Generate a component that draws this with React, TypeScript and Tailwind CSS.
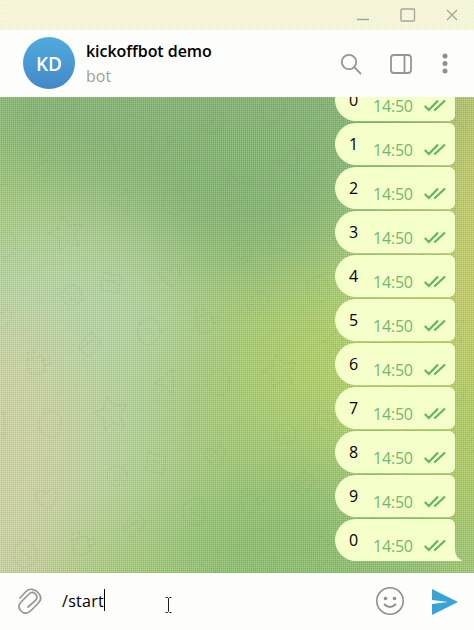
import React from "react";

const messages = ["0", "1", "2", "3", "4", "5", "6", "7", "8", "9", "0"];

function Checks() {
  return (
    <svg width="24" height="13" viewBox="0 0 24 13" fill="none" stroke="#5cb55c" strokeWidth="2">
      <path d="M.8 7 4.8 11 14 1.5M10 10.8h1.2L21 1.5" />
    </svg>
  );
}

function Bubble({ text, last }: { text: string; last: boolean }) {
  return (
    <div className="relative flex h-[42px] w-[120px] shrink-0 rounded-l-[21px] rounded-r-[6px] bg-[#f5ffca]">
      <span className="ml-[14px] mt-[9px] w-[24px] text-[16px] leading-[24px] text-black">{text}</span>
      <span className="mt-[15px] w-[51px] text-[16px] leading-[24px] tracking-[-0.2px] text-[#72b86c]">14:50</span>
      <span className="mt-[20px]"><Checks /></span>
      {last && (
        <svg className="absolute bottom-0 left-[112px]" width="16" height="14" viewBox="0 0 16 14">
          <path d="M0 0h8c0 6 1 11 7 13.2c0 .5-.4.8-1 .8H0z" fill="#f5ffca" />
        </svg>
      )}
    </div>
  );
}

function Wallpaper() {
  return (
    <svg className="absolute inset-0" width="474" height="476" viewBox="0 0 474 476">
      <defs>
        <filter id="soft" x="-50%" y="-50%" width="200%" height="200%"><feGaussianBlur stdDeviation="38" /></filter>
        <pattern id="dots" width="4" height="4" patternUnits="userSpaceOnUse">
          <path d="M0 0h1v1H0zM2 2h1v1H2zM2 0h1v1H2zM0 2h1v1H0z" fill="#e0ecc0" opacity=".3" />
          <path d="M1 1h1v1H1zM3 3h1v1H3zM3 1h1v1H3zM1 3h1v1H1z" fill="#688b58" opacity=".28" />
        </pattern>
        <pattern id="doodles" width="174" height="186" patternUnits="userSpaceOnUse" patternTransform="rotate(-14)">
          <g fill="none" stroke="#57825a" strokeWidth="1" strokeDasharray="3 2" opacity=".24">
            <circle cx="22" cy="24" r="10" /><path d="M18 22h1m6 0h1m-8 5q4 4 8 0" />
            <path d="m58 9 16 8-7 16-16-8zM60 18l8 4M116 34q-9-14 2-14 5 0 5 5 5-8 9-2 3 6-10 17zM15 76l16-12 8 12-16 12zM19 77l14-5" />
            <path d="M80 68q17-9 19 6t-14 17q-14-7-5-23zm5 5 7 10M136 75h16v14q-8 7-16 0zM152 79h6v6h-6M139 71v-5m6 5v-5" />
            <path d="m25 142 6-12 6 12 12 1-10 9 2 12-10-7-10 6 2-12-9-8zM80 130l22-10-6 26-6-12zM132 140q15-18 23 0-1 17-14 17-11-6-9-17z" />
          </g>
        </pattern>
      </defs>
      <rect width="474" height="476" fill="#a4c97a" />
      <g filter="url(#soft)">
        <ellipse cx="220" cy="0" rx="270" ry="110" fill="#82b274" />
        <ellipse cx="250" cy="85" rx="115" ry="85" fill="#80b272" />
        <ellipse cx="50" cy="225" rx="135" ry="95" fill="#b5d5a8" />
        <ellipse cx="90" cy="350" rx="80" ry="90" fill="#b5d39f" />
        <ellipse cx="0" cy="370" rx="85" ry="160" fill="#cfd3a8" />
        <ellipse cx="380" cy="270" rx="140" ry="85" fill="#afcf67" />
        <ellipse cx="315" cy="460" rx="145" ry="85" fill="#8abe70" />
        <ellipse cx="500" cy="130" rx="60" ry="190" fill="#cccc68" />
        <ellipse cx="490" cy="360" rx="45" ry="90" fill="#b4cb62" />
      </g>
      <rect width="474" height="476" fill="url(#doodles)" />
      <rect width="474" height="476" fill="url(#dots)" />
    </svg>
  );
}

function TitleBar() {
  return (
    <div className="relative flex h-[30px] shrink-0 items-center justify-end bg-[#f7f7dd] pr-[13px]">
      <svg className="absolute inset-0" width="474" height="30">
        <pattern id="grain" width="4" height="4" patternUnits="userSpaceOnUse">
          <path d="M0 0h1v1H0zM2 2h1v1H2z" fill="#f9f896" opacity=".65" />
          <path d="M2 0h1v1H2zM0 2h1v1H0z" fill="#d9d9f8" opacity=".65" />
        </pattern>
        <rect width="474" height="30" fill="url(#grain)" />
      </svg>
      <svg className="relative" width="106" height="18" viewBox="0 0 106 18" fill="none" stroke="#a6a69e" strokeWidth="1.4">
        <path d="M2 13.5h12M92 4l10 10m0-10-10 10" /><rect x="46" y="3" width="13.5" height="12" rx="1" />
      </svg>
    </div>
  );
}

export default function App() {
  return (
    <div className="flex h-[630px] w-[474px] flex-col overflow-hidden bg-[#fdfdfc] font-['Open_Sans','Noto_Sans',sans-serif]">
      <TitleBar />
      <header className="flex h-[67px] shrink-0 pl-[23px]">
        <div className="mt-[7px] flex size-[52px] items-center justify-center rounded-full bg-gradient-to-b from-[#50abdd] to-[#4388c8] pt-[2px] text-[19px] font-semibold text-white">KD</div>
        <div className="ml-[11px] mt-[9px] w-[252px]">
          <div className="text-[16px] font-semibold leading-[24px] tracking-[-0.05px] text-black">kickoffbot demo</div>
          <div className="text-[16px] leading-[26px] text-[#a0a09a]">bot</div>
        </div>
        <svg className="mt-[20px]" width="120" height="28" viewBox="0 0 120 28" fill="none" stroke="#96968c" strokeWidth="1.8">
          <circle cx="11" cy="12" r="7.2" /><path d="m16.2 17.2 6.8 6.8" />
          <rect x="53" y="5" width="20" height="18" rx="3" /><path d="M66.5 5v18" />
          <g fill="#909088" stroke="none"><circle cx="107" cy="6" r="2.5" /><circle cx="107" cy="13.5" r="2.5" /><circle cx="107" cy="21" r="2.5" /></g>
        </svg>
      </header>
      <main className="relative h-[476px] shrink-0 overflow-hidden">
        <Wallpaper />
        <div className="relative -mt-[18px] ml-[335px] flex flex-col gap-[2px]">
          {messages.map((text, index) => <Bubble key={index} text={text} last={index === messages.length - 1} />)}
        </div>
      </main>
      <footer className="flex h-[57px] shrink-0 pl-[17px]">
        <svg className="mt-[14px]" width="27" height="30" viewBox="0 0 27 30" fill="none" stroke="#96968c" strokeWidth="1.7" strokeLinecap="round">
          <path d="M3 11 9 4.5c4-4 9-2 12 1s4 7 0 11l-7 7c-3.5 3.5-7 3.5-10 .5s-3-6 .5-9.5L12 7c2.5-2.5 4.5-2 6.5 0s2 4 0 6.5L11 20" />
        </svg>
        <div className="ml-[18px] mt-[16px] flex h-[24px] w-[44px] text-[16px] leading-[24px] tracking-[0.3px] text-black">
          <span>/start</span><i className="h-[22px] w-px bg-black" />
        </div>
        <svg className="ml-[59px] mt-[23px]" width="8" height="18" viewBox="0 0 8 18" fill="none" stroke="#222">
          <path d="M.5 1.5h2l1 1 1-1h2M3.5 2v13M.5 16.5h2l1-1 1 1h2" />
        </svg>
        <svg className="ml-[202px] mt-[13px]" width="30" height="30" viewBox="0 0 30 30" fill="none" stroke="#909088" strokeWidth="1.6">
          <circle cx="15" cy="15" r="13.2" /><path d="M9 18q6 6 12 0" strokeWidth="1.9" />
          <g fill="#909088" stroke="none"><circle cx="10.5" cy="12.5" r="1.8" /><circle cx="19.5" cy="12.5" r="1.8" /></g>
        </svg>
        <svg className="ml-[27px] mt-[16px]" width="27" height="26" viewBox="0 0 27 26">
          <path d="M0 0 26 13 0 26 0 15 16 13 0 11z" fill="#38a3d5" />
        </svg>
      </footer>
    </div>
  );
}
